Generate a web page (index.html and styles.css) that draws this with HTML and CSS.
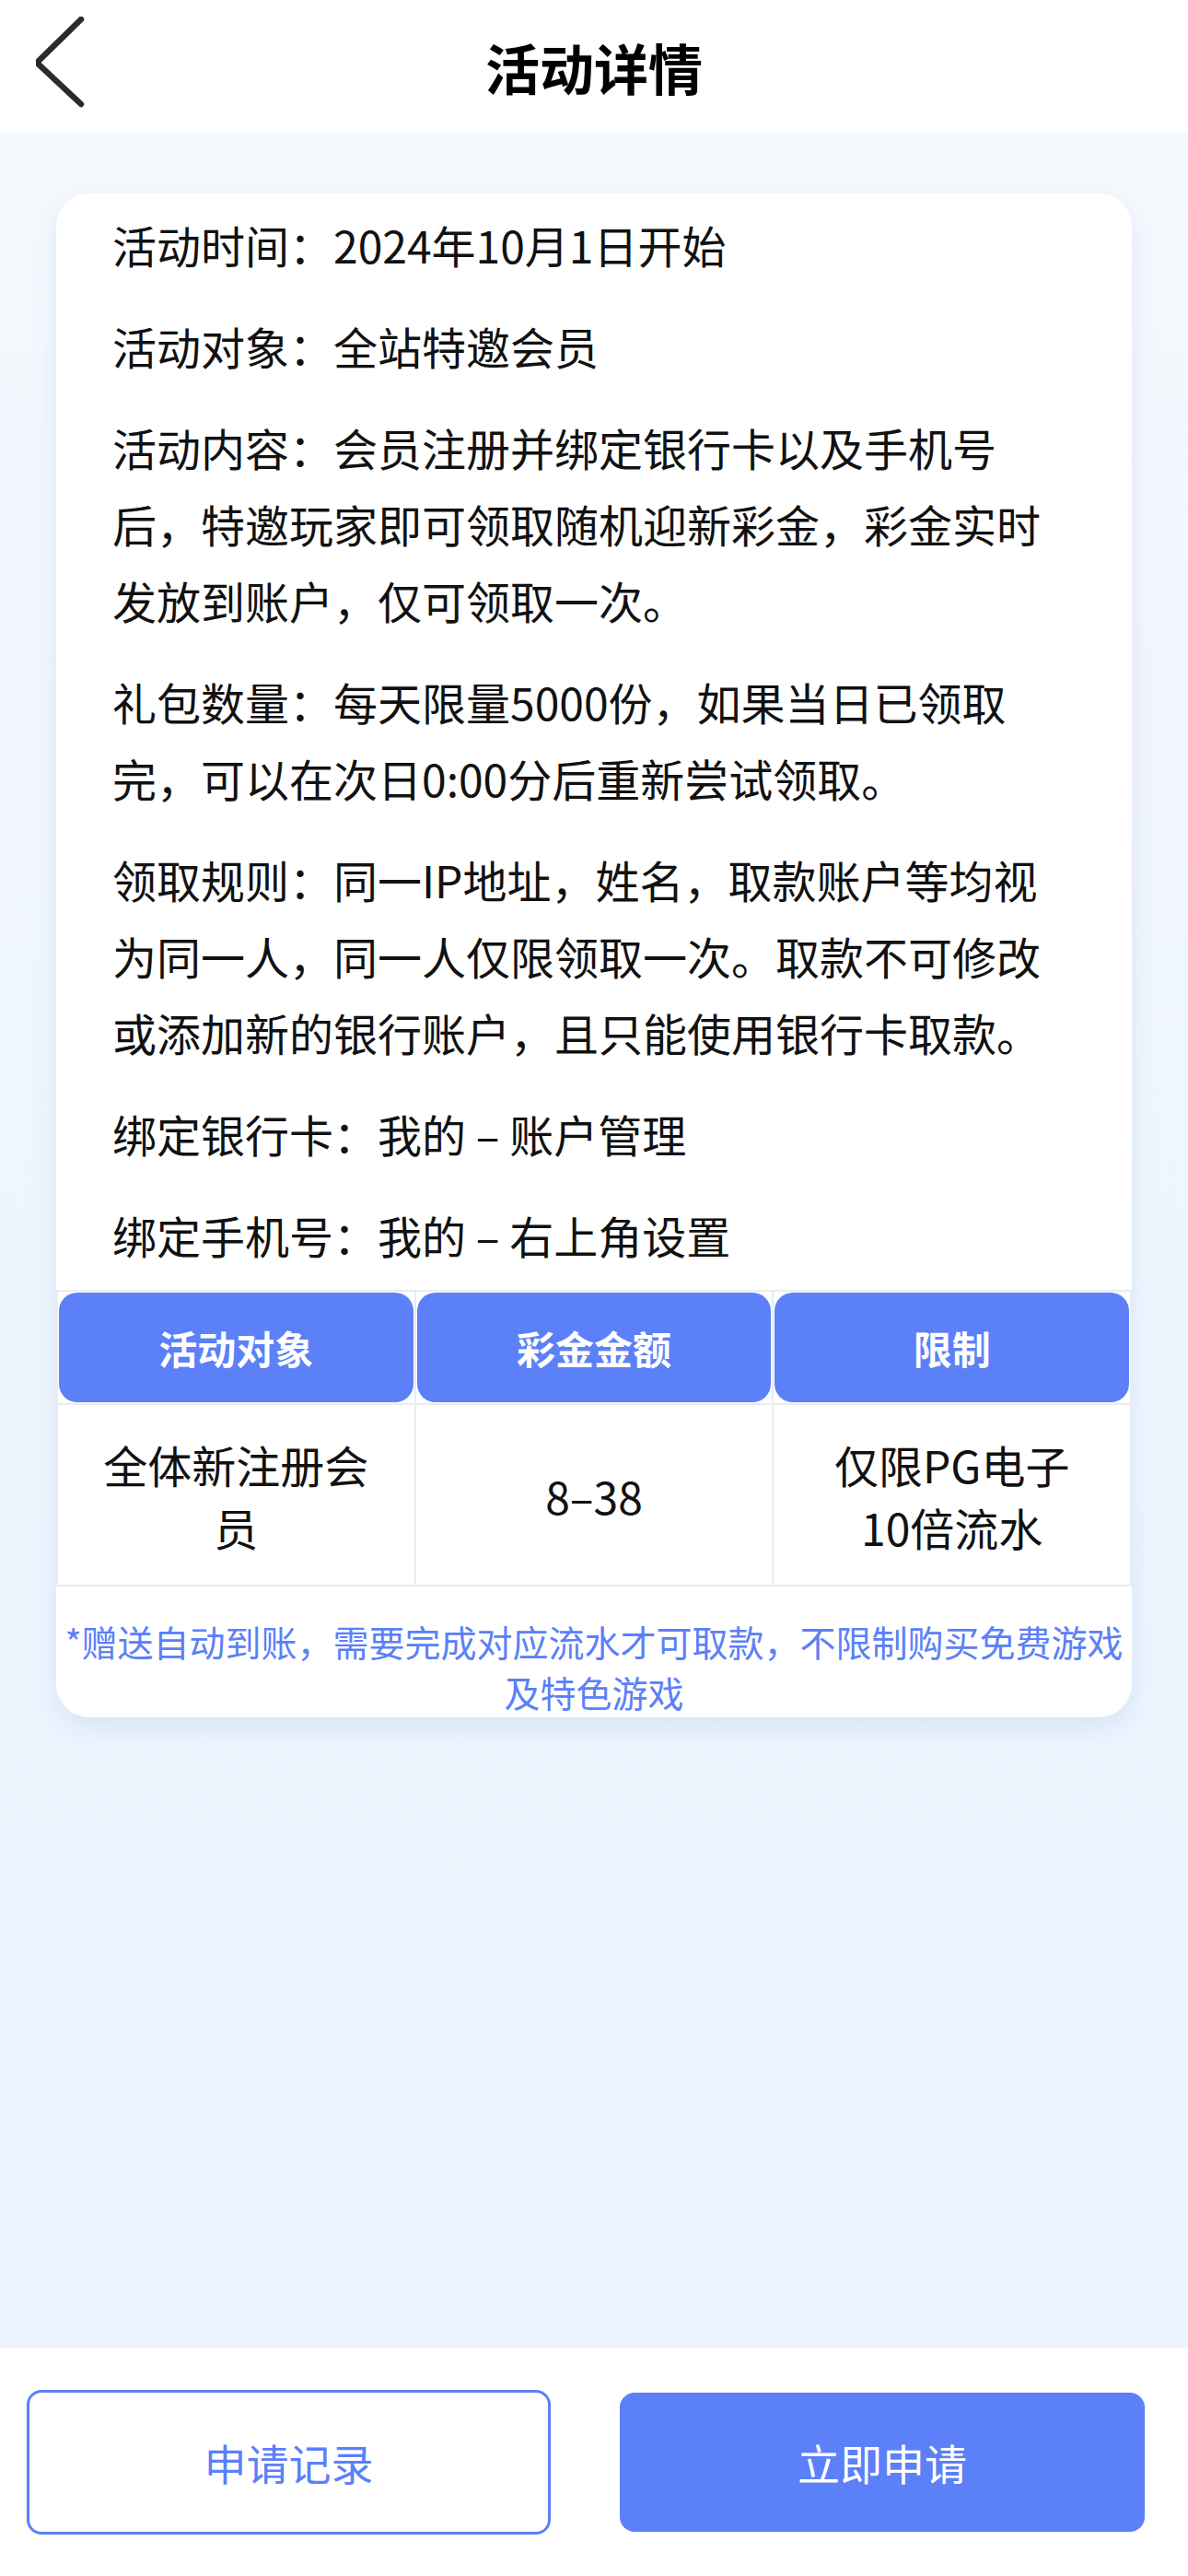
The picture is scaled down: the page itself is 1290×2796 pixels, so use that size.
FILE: index.html
```html
<!DOCTYPE html>
<html lang="zh-CN">
<head>
<meta charset="utf-8">
<title>活动详情</title>
<link rel="stylesheet" href="styles.css">
</head>
<body>
<div class="page">
  <header class="topbar">
    <div class="back">
      <svg width="60" height="110" viewBox="0 0 60 110" class="back-icon">
        <polyline points="49,3 1,50 49,95" fill="none" stroke="#2b2b2b" stroke-width="6.5" stroke-linecap="round" stroke-linejoin="round"/>
      </svg>
    </div>
    <h1 class="title">活动详情</h1>
    <div class="spacer"></div>
  </header>

  <main class="main">
    <section class="card">
      <div class="content">
        <p>活动时间：2024年10月1日开始</p>
        <p>活动对象：全站特邀会员</p>
        <p>活动内容：会员注册并绑定银行卡以及手机号后，特邀玩家即可领取随机迎新彩金，彩金实时发放到账户，仅可领取一次。</p>
        <p>礼包数量：每天限量5000份，如果当日已领取完，可以在次日0:00分后重新尝试领取。</p>
        <p>领取规则：同一IP地址，姓名，取款账户等均视为同一人，同一人仅限领取一次。取款不可修改或添加新的银行账户，且只能使用银行卡取款。</p>
        <p>绑定银行卡：我的 – 账户管理</p>
        <p>绑定手机号：我的 – 右上角设置</p>
      </div>
      <div class="tbl">
        <div class="th"><span>活动对象</span></div>
        <div class="th"><span>彩金金额</span></div>
        <div class="th"><span>限制</span></div>
        <div class="td"><span>全体新注册会员</span></div>
        <div class="td"><span>8–38</span></div>
        <div class="td"><span>仅限PG电子10倍流水</span></div>
      </div>
      <div class="note">
        <span class="note-line">*赠送自动到账，需要完成对应流水才可取款，不限制购买免费游戏</span>
        <span class="note-line">及特色游戏</span>
      </div>
    </section>
  </main>

  <footer class="bottombar">
    <button class="btn btn-outline">申请记录</button>
    <button class="btn btn-solid">立即申请</button>
  </footer>
</div>
</body>
</html>
```

FILE: styles.css
```css
* { box-sizing: border-box; }

html, body {
  margin: 0;
  padding: 0;
}

body {
  font-family: "Noto Sans CJK SC", "Noto Sans", sans-serif;
  color: #111;
  background: #ffffff;
}

.page {
  width: 1290px;
  min-height: 2796px;
  display: flex;
  flex-direction: column;
}

.topbar {
  height: 144px;
  background: #ffffff;
  display: grid;
  grid-template-columns: 200px 1fr 200px;
  align-items: center;
}

.back {
  padding-left: 39px;
  padding-top: 2px;
  display: flex;
  align-items: center;
}

.back-icon { display: block; }

.title {
  margin: 0;
  text-align: center;
  font-size: 59px;
  font-weight: 700;
  color: #000;
  line-height: 1;
}

.main {
  flex: 1;
  background: linear-gradient(180deg, #f5f8fd 0%, #eef5fe 50%, #eaf3ff 100%);
  padding-top: 66px;
}

.card {
  width: 1168px;
  margin: 0 auto;
  background: #ffffff;
  border-radius: 36px;
  overflow: hidden;
  box-shadow: 0 12px 26px rgba(120, 150, 200, 0.16);
}

.content {
  padding: 14px 80px 18px 61px;
}

.content p {
  margin: 0 0 27px 0;
  font-size: 48px;
  line-height: 83px;
  color: #111;
}

.content p:last-child { margin-bottom: 0; }

.tbl {
  display: grid;
  grid-template-columns: repeat(3, 1fr);
  grid-template-rows: 121px 195px;
  gap: 2px;
  padding: 2px;
  background: #e8ecf2;
}

.th {
  background: #ffffff;
  padding: 1px;
  display: flex;
}

.th span {
  flex: 1;
  background: #5b80f8;
  border-radius: 20px;
  color: #ffffff;
  font-size: 42px;
  font-weight: 700;
  display: flex;
  align-items: center;
  justify-content: center;
}

.td {
  background: #ffffff;
  display: flex;
  align-items: center;
  justify-content: center;
  text-align: center;
  padding: 0 42px;
  font-size: 48px;
  line-height: 68px;
  color: #111;
}

.note {
  padding: 32px 0 0 0;
  text-align: center;
  color: #5b80f8;
  font-size: 39px;
  line-height: 55px;
}

.note-line {
  display: block;
  white-space: nowrap;
}

.bottombar {
  height: 248px;
  background: #ffffff;
  display: flex;
  align-items: center;
  padding-left: 29px;
}

.btn {
  font-family: "Noto Sans CJK SC", "Noto Sans", sans-serif;
  font-size: 46px;
  border-radius: 16px;
  display: flex;
  align-items: center;
  justify-content: center;
  cursor: pointer;
}

.btn-outline {
  width: 569px;
  height: 157px;
  background: #ffffff;
  border: 3px solid #5b80f8;
  color: #5b80f8;
}

.btn-solid {
  width: 570px;
  height: 151px;
  margin-left: 75px;
  background: #5b80f8;
  border: none;
  color: #ffffff;
}
```
